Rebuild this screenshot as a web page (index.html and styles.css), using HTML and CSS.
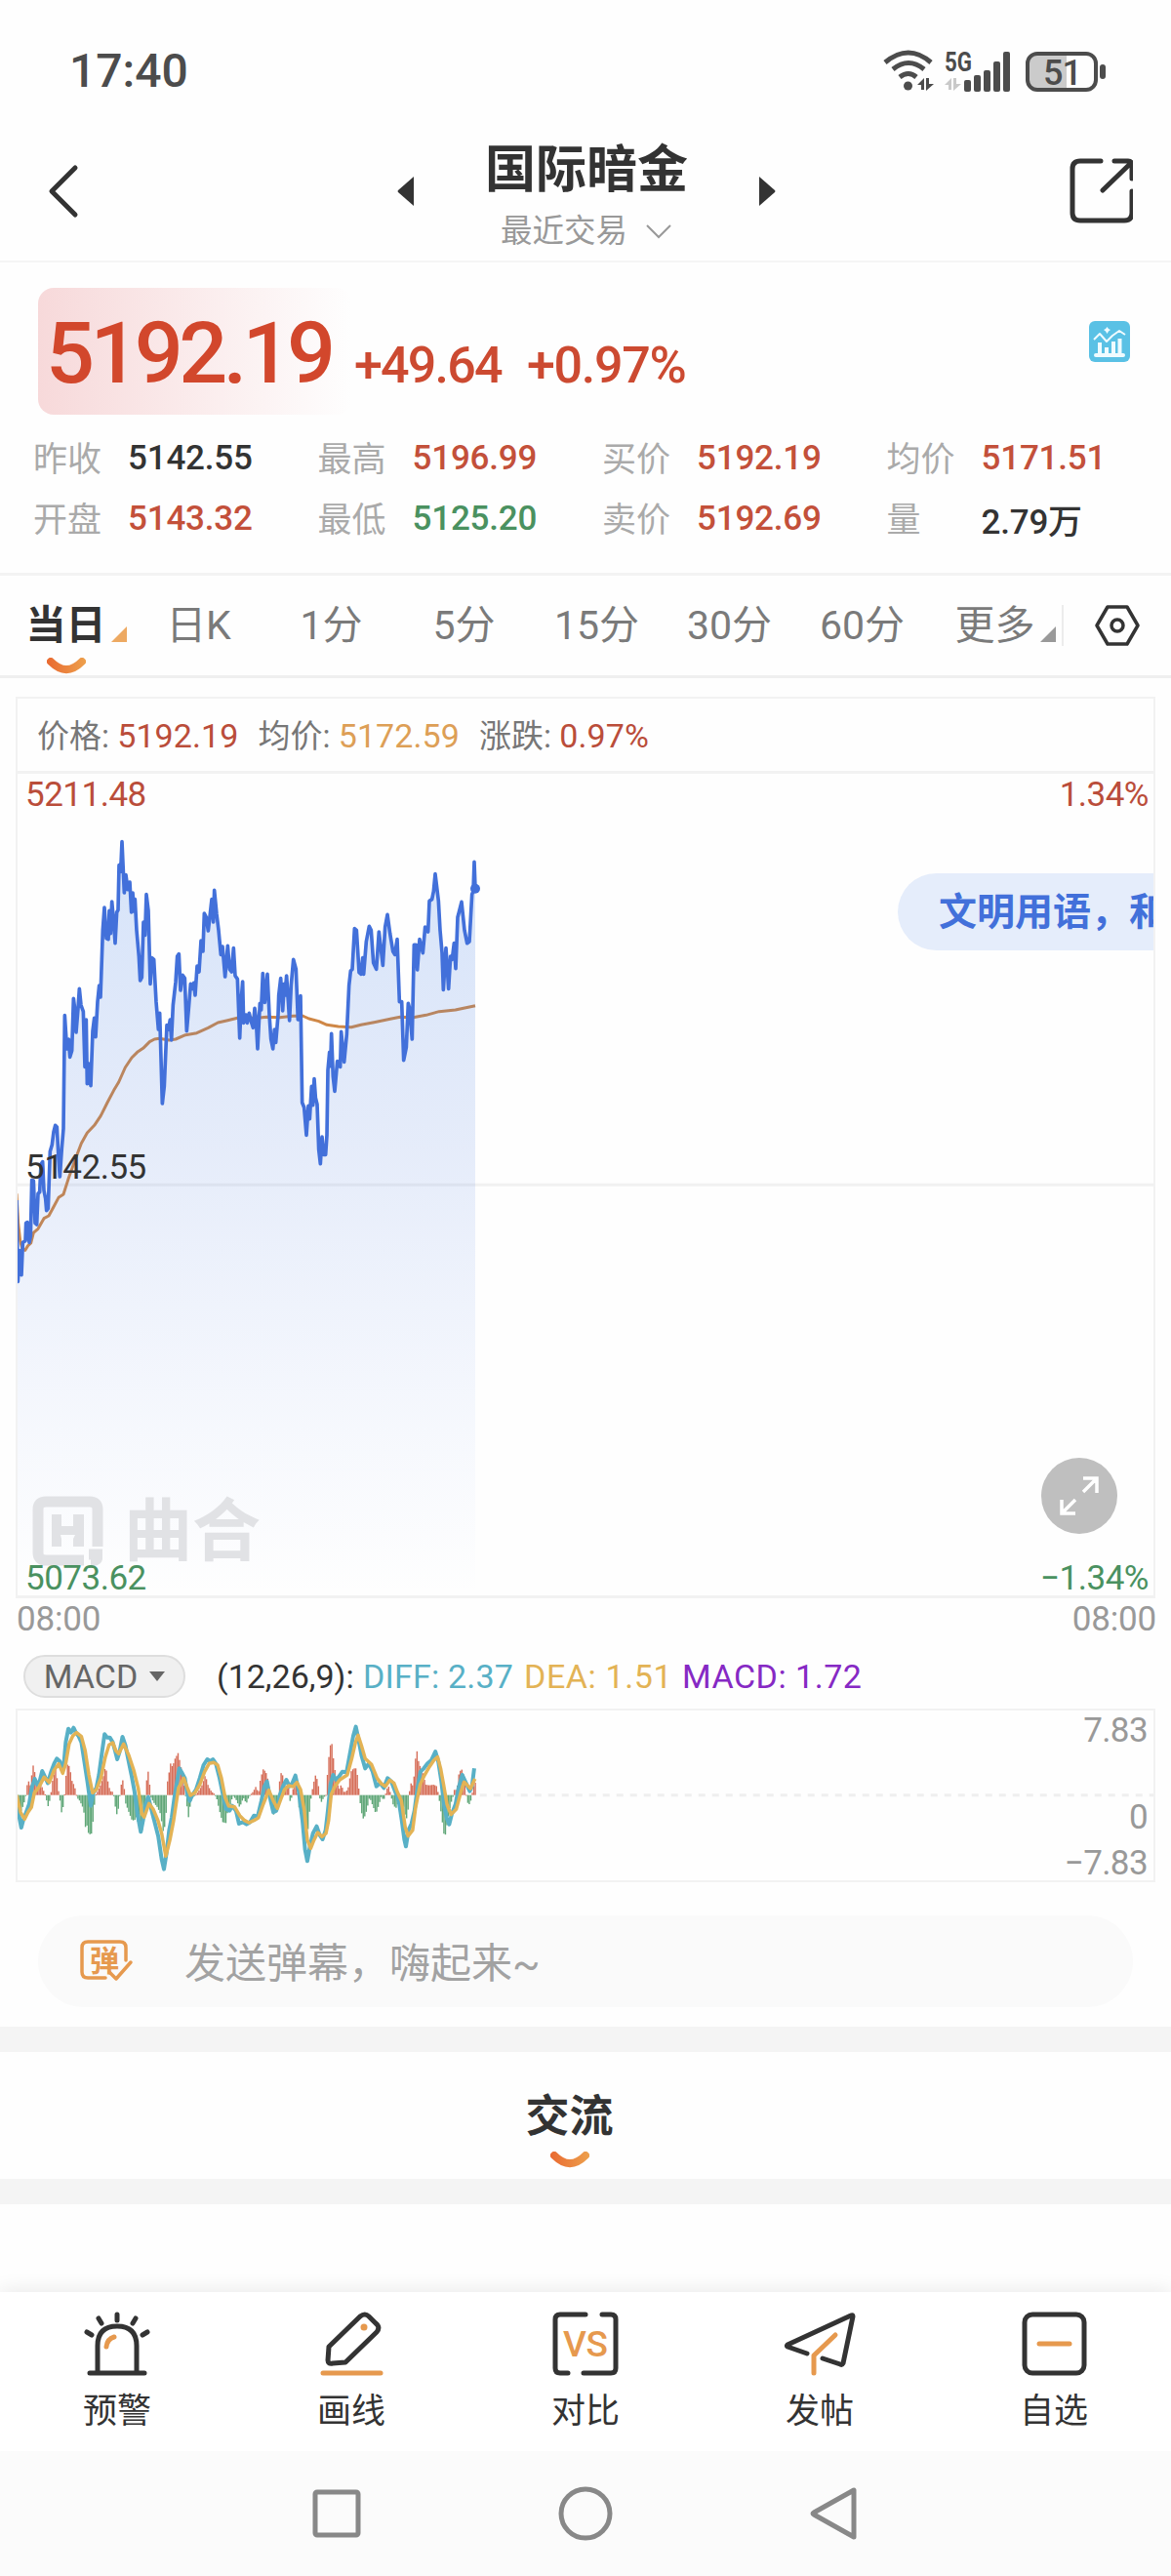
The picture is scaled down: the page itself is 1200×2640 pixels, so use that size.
FILE: index.html
```html
<!DOCTYPE html>
<html lang="zh-CN">
<head>
    <meta charset="UTF-8">
    <meta name="viewport" content="width=device-width, initial-scale=1.0">
    <title>国际暗金</title>
    <link rel="stylesheet" href="styles.css">
</head>
<body>
    <div class="status-bar">
        <span class="clock">17:40</span>
        <svg class="status-icons" width="230" height="44" viewBox="0 0 230 44">
            <g fill="none" stroke="#4c4c4c" stroke-width="5">
                <path d="M2 13Q26 -7 49 13"/>
                <path d="M10 20Q26 7 42 20"/>
                <path d="M17 28Q26 21 34 28"/>
            </g>
            <circle cx="25.500" cy="37" r="4.500" fill="#4c4c4c"/>
            <path d="M35 36L42 29V41H39V36ZM44 29H47V35H52L44 42Z" fill="#4c4c4c"/>
            <path d="M63 36L70 29V41H67V36ZM72 29H75V35H80L72 42Z" fill="#c9c9c9"/>
            <text class="net" x="63" y="22" textLength="28" lengthAdjust="spacingAndGlyphs">5G</text>
            <g fill="#4c4c4c">
                <rect x="83" y="31" width="7" height="12" rx="2"/>
                <rect x="93" y="26" width="7" height="17" rx="2"/>
                <rect x="103" y="21" width="7" height="22" rx="2"/>
                <rect x="113" y="12" width="7" height="31" rx="2"/>
                <rect x="123" y="2" width="7" height="41" rx="2"/>
            </g>
            <path d="M157 4H188V41H157Q148 41 148 32V13Q148 4 157 4Z" fill="#cbcbcb"/>
            <rect x="148" y="4" width="70" height="37" rx="10" fill="none" stroke="#4c4c4c" stroke-width="4"/>
            <rect x="222" y="15" width="6" height="15" rx="3" fill="#4c4c4c"/>
            <text class="battery" x="164" y="35.500">51</text>
        </svg>
    </div>

    <header class="header">
        <svg class="back" width="32" height="56" viewBox="0 0 32 56"><path d="M28 4L4 28L28 52" fill="none" stroke="#333" stroke-width="5" stroke-linecap="round" stroke-linejoin="round"/></svg>
        <div class="switcher">
            <svg width="17" height="30" viewBox="0 0 17 30"><path d="M17 0V30L1 16Q0 15 1 14Z" fill="#333"/></svg>
            <div class="title">
                <h1>国际暗金</h1>
                <p>最近交易<svg width="28" height="16" viewBox="0 0 28 16"><path d="M2 2L14 14L26 2" fill="none" stroke="#999" stroke-width="2"/></svg></p>
            </div>
            <svg width="17" height="30" viewBox="0 0 17 30"><path d="M0 0V30L16 16Q17 15 16 14Z" fill="#333"/></svg>
        </div>
        <svg class="share" width="65" height="67" viewBox="0 0 65 67" fill="none" stroke="#333" stroke-width="5" stroke-linecap="round" stroke-linejoin="round"><path d="M32 3H11Q3 3 3 11V56Q3 64 11 64H56Q64 64 64 56V34M46 3H60Q64 3 64 8V21M34 33L62 6"/></svg>
    </header>

    <section class="quote">
        <div class="price-line">
            <span class="price">5192.19</span>
            <span class="change">+49.64</span>
            <span class="percent">+0.97%</span>
            <svg class="chart-badge" width="42" height="42" viewBox="0 0 42 42">
                <rect width="42" height="42" rx="6" fill="#5ac1e5"/>
                <g fill="none" stroke="#effbff" stroke-linejoin="round">
                    <path d="M5 19L11 13L18 21L24 15L31 10L37 14" stroke-width="2"/>
                    <path d="M11 34V22M18 34V27M25 34V21M31.500 34V18" stroke-width="4"/>
                    <path d="M7 35H35" stroke-width="4" stroke-linecap="round"/>
                </g>
                <path d="M18.500 6L20 8L22 9L20 10.500L18.500 13L17 10.500L15 9L17 8Z" fill="#effbff"/>
            </svg>
        </div>
        <dl class="stats">
            <div><dt>昨收</dt><dd>5142.55</dd></div>
            <div><dt>最高</dt><dd class="up">5196.99</dd></div>
            <div><dt>买价</dt><dd class="up">5192.19</dd></div>
            <div><dt>均价</dt><dd class="up">5171.51</dd></div>
            <div><dt>开盘</dt><dd class="up">5143.32</dd></div>
            <div><dt>最低</dt><dd class="down">5125.20</dd></div>
            <div><dt>卖价</dt><dd class="up">5192.69</dd></div>
            <div><dt>量</dt><dd>2.79万</dd></div>
        </dl>
    </section>

    <nav class="tabs">
        <a class="tab active">当日<i class="corner"></i>
            <svg class="smile" width="40" height="18" viewBox="0 0 40 18"><path d="M4 4Q20 20 36 4" fill="none" stroke="url(#smileFill)" stroke-width="8" stroke-linecap="round"/></svg>
        </a>
        <a class="tab">日K</a>
        <a class="tab">1分</a>
        <a class="tab">5分</a>
        <a class="tab">15分</a>
        <a class="tab">30分</a>
        <a class="tab">60分</a>
        <a class="tab more">更多<i class="corner"></i></a>
        <a class="settings">
            <svg width="46" height="42" viewBox="0 0 46 42" fill="none" stroke="#333"><path d="M13 2H33L44 21L33 40H13L2 21Z" stroke-width="3.500" stroke-linejoin="round"/><circle cx="23" cy="21" r="6" stroke-width="3.500"/></svg>
        </a>
    </nav>

    <section class="chart-card">
        <div class="legend">
            <span>价格: <b class="up">5192.19</b></span>
            <span>均价: <b class="avg">5172.59</b></span>
            <span>涨跌: <b class="up">0.97%</b></span>
        </div>
        <div class="price-chart">
            <svg id="priceChart" width="1164" height="842" viewBox="54 -81 3492 2526" fill="none">
                <defs>
                    <linearGradient id="areaFill" x1="0" y1="0" x2="0" y2="1">
                        <stop offset="0" stop-color="#3f80e8" stop-opacity="0.21"/>
                        <stop offset="0.4" stop-color="#4b7be0" stop-opacity="0.14"/>
                        <stop offset="1" stop-color="#6a95f4" stop-opacity="0"/>
                    </linearGradient>
                    <linearGradient id="smileFill" x1="0" y1="0" x2="40" y2="0" gradientUnits="userSpaceOnUse">
                        <stop offset="0" stop-color="#e96a31"/>
                        <stop offset="1" stop-color="#eda04c"/>
                    </linearGradient>
                </defs>
                <path d="M54 1183H3546" stroke="#f1f1f1" stroke-width="9"/>
                <polyline id="avgLine" stroke="#cf8746" stroke-width="9" stroke-linejoin="round"/>
                <polygon id="priceArea" fill="url(#areaFill)"/>
                <polyline id="priceLine" stroke="#4270da" stroke-width="11" stroke-linejoin="round"/>
                <circle cx="1461" cy="272" r="15" fill="#4270da"/>
            </svg>
            <div class="watermark">
                <svg width="73" height="72" viewBox="0 0 73 72"><path d="M53 66H14Q6 66 6 58V14Q6 6 14 6H59Q67 6 67 14V52M58 60H72" fill="none" stroke="#e1e2e5" stroke-width="11"/><path d="M60 60H72V63Q72 71 63 72H60ZM20 19H30V31H42V19H53V52H42V44L44 40H29L30 44V52H20Z" fill="#e1e2e5"/></svg>
                <span>曲合</span>
            </div>
            <div class="danmaku"><span>文明用语，和谐交流</span></div>
            <span class="axis top-left up">5211.48</span>
            <span class="axis top-right up">1.34%</span>
            <span class="axis mid-left">5142.55</span>
            <span class="axis bottom-left down">5073.62</span>
            <span class="axis bottom-right down">−1.34%</span>
            <svg class="expand" width="78" height="78" viewBox="0 0 78 78"><circle cx="39" cy="39" r="39" fill="#bfbfbf"/><path d="M43 35L57 21M43 21H57V36M35 43L21 57M21 43V57H35" fill="none" stroke="#fff" stroke-width="3.500"/></svg>
        </div>
    </section>
    <div class="time-axis"><span>08:00</span><span>08:00</span></div>

    <section class="macd">
        <div class="macd-head">
            <button class="pill">MACD<i></i></button>
            <span class="params">(12,26,9):</span>
            <span class="diff">DIFF: 2.37</span>
            <span class="dea">DEA: 1.51</span>
            <span class="bar">MACD: 1.72</span>
        </div>
        <div class="macd-chart">
            <svg width="1164" height="174" viewBox="47 222 3042 522" preserveAspectRatio="none" fill="none">
                <path class="line zero" d="M1285 482H3089"/>
                <g id="bars"></g>
                <polyline class="line diff-line" id="diffLine"/>
                <polyline class="line dea-line" id="deaLine"/>
            </svg>
            <span class="scale high">7.83</span>
            <span class="scale middle">0</span>
            <span class="scale low">−7.83</span>
        </div>
    </section>

    <div class="comment-input">
        <svg width="56" height="46" viewBox="0 0 56 46"><path d="M27 40H9Q3 40 3 34V9Q3 3 9 3H42Q48 3 48 9V22M53 24L38 41L31 34" fill="none" stroke="#e6994e" stroke-width="3.500" stroke-linecap="round" stroke-linejoin="round"/><text x="11" y="33">弹</text></svg>
        <span>发送弹幕，嗨起来~</span>
    </div>

    <section class="community">
        <h2>交流</h2>
        <svg width="40" height="18" viewBox="0 0 40 18"><path d="M4 4Q20 20 36 4" fill="none" stroke="url(#smileFill)" stroke-width="8" stroke-linecap="round"/></svg>
    </section>
    <div class="feed"></div>

    <footer class="toolbar">
        <a>
            <svg width="68" height="66" viewBox="0 0 68 66" fill="none" stroke="#333" stroke-width="5" stroke-linecap="round"><path d="M14 62V35Q14 15 34 15T54 35V62M6 63H62M34 3V9M15 7L18 12M53 7L50 12M3 21L8 24M65 21L60 24"/><path d="M23 36Q24 28 31 26" stroke="#e6994e"/></svg>
            预警
        </a>
        <a>
            <svg width="68" height="66" viewBox="0 0 68 66" fill="none" stroke="#333" stroke-width="5" stroke-linecap="round" stroke-linejoin="round"><path d="M11 36L43 5Q48 1 52 5L59 12Q64 16 60 21L28 52L15 53Q10 54 10 50Z"/><circle cx="47" cy="16" r="3.500" fill="#e6994e" stroke="none"/><path d="M5 63H64" stroke="#e6994e"/></svg>
            画线
        </a>
        <a>
            <svg width="68" height="66" viewBox="0 0 68 66" fill="none" stroke="#333" stroke-width="5" stroke-linecap="round"><path d="M34 3H8Q3 3 3 8V58Q3 63 8 63H16M32 63H60Q65 63 65 58V8Q65 3 60 3H51"/><text x="11" y="46" textLength="46">VS</text></svg>
            对比
        </a>
        <a>
            <svg width="74" height="66" viewBox="0 0 74 66" fill="none" stroke="#333" stroke-width="5" stroke-linecap="round" stroke-linejoin="round"><path d="M24 43L4 36Q3 35 4 34L69 4Q71 3 71 5L61 53Q60 55 58 54L40 48"/><path d="M53 24L31 45V63" stroke="#e6994e"/></svg>
            发帖
        </a>
        <a>
            <svg width="68" height="66" viewBox="0 0 68 66" fill="none" stroke-width="5" stroke-linecap="round"><rect x="4" y="3" width="61" height="60" rx="8" stroke="#333"/><path d="M19 33H50" stroke="#e6994e"/></svg>
            自选
        </a>
    </footer>

    <div class="system-nav">
        <svg width="56" height="56" viewBox="0 0 56 56"><rect x="6" y="6" width="44" height="44" rx="2" fill="none" stroke="#888" stroke-width="5"/></svg>
        <svg width="56" height="56" viewBox="0 0 56 56"><circle cx="28" cy="28" r="25" fill="none" stroke="#888" stroke-width="5"/></svg>
        <svg width="56" height="56" viewBox="0 0 56 56"><path d="M48 4V52L7 29Q5 28 7 27Z" fill="none" stroke="#888" stroke-width="5" stroke-linejoin="round"/></svg>
    </div>
    <script src="chart.js"></script>
</body>
</html>
```
FILE: styles.css
```css
* {
    box-sizing: border-box;
}
body {
    margin: 0;
    width: 1200px;
    height: 2640px;
    display: flex;
    flex-direction: column;
    background-color: #fefefe;
    color: #333;
    font-family: Roboto, "Noto Sans CJK SC", sans-serif;
    overflow: hidden;
}
svg {
    display: block;
    flex: none;
}
h1, h2, p, dl, dt, dd {
    margin: 0;
}
.up {
    color: #c3503a;
}
.down {
    color: #4a9160;
}

/* phone status bar */
.status-bar {
    height: 145px;
    padding: 0 65px 0 71px;
    display: flex;
    align-items: center;
    justify-content: space-between;
}
.clock {
    font-size: 48px;
    font-weight: 500;
    color: #4c4c4c;
}
.status-icons {
    overflow: visible;
}
.status-icons text {
    font-weight: 600;
    fill: #4c4c4c;
}
.status-icons .net {
    font-size: 28px;
    font-weight: 700;
}
.status-icons .battery {
    font-size: 36px;
    font-weight: 500;
    letter-spacing: -1px;
}

/* title */
.header {
    height: 124px;
    padding: 0 39px 21px 49px;
    display: flex;
    align-items: center;
    justify-content: space-between;
    border-bottom: 2px solid #f5f5f5;
}
.switcher {
    width: 388px;
    display: flex;
    align-items: center;
    justify-content: space-between;
}
.back {
    margin-right: 25px;
}
.title {
    text-align: center;
}
.title h1 {
    font-size: 52px;
    line-height: 60px;
    margin-top: 14px;
}
.title p {
    display: flex;
    align-items: center;
    justify-content: center;
    gap: 18px;
    font-size: 32.500px;
    line-height: 48px;
    margin-top: 8px;
    color: #999;
}

/* quote */
.quote {
    height: 321px;
    padding: 26px 0 0 39px;
    border-bottom: 3px solid #f3f3f3;
}
.price-line {
    display: flex;
    height: 130px;
    color: #cc4a31;
    font-weight: 500;
    white-space: nowrap;
}
.price {
    width: 322px;
    padding-left: 8px;
    border-radius: 16px;
    background: linear-gradient(90deg, #f7d9da, #fefefe);
    font-size: 88px;
    line-height: 133px;
    letter-spacing: -4.600px;
    color: #d2472c;
}
.change, .percent {
    font-size: 52px;
    line-height: 159px;
    letter-spacing: -1.800px;
}
.change {
    width: 179px;
    padding-left: 2px;
}
.percent {
    letter-spacing: -1.300px;
}
.chart-badge {
    margin: 34px 42px 0 auto;
}
.stats {
    display: grid;
    grid-template-columns: repeat(4, 291.500px);
    grid-template-rows: 62px 62px;
    margin: 13px 0 0 -5px;
    font-size: 35px;
}
.stats div {
    display: flex;
    align-items: center;
    white-space: nowrap;
}
.stats dt {
    width: 97px;
    padding-bottom: 4px;
    color: #aaa;
}
.stats dd {
    font-weight: 500;
    letter-spacing: -0.200px;
}

/* period tabs */
.tabs {
    height: 105px;
    display: flex;
    border-bottom: 3px solid #efefef;
    font-size: 41px;
    line-height: 103px;
    color: #7a7a7a;
}
.tab {
    position: relative;
    width: 136px;
    padding-right: 1px;
    text-align: center;
}
.tab.active {
    color: #333;
    font-weight: 700;
}
.corner {
    position: absolute;
    right: 6px;
    bottom: 34px;
    border-left: 16px solid transparent;
    border-bottom: 16px solid #eda962;
}
.more .corner {
    border-bottom-color: #999;
}
.smile {
    position: absolute;
    left: 48px;
    bottom: 0;
}
.settings {
    flex: 1;
    display: flex;
    align-items: center;
    justify-content: center;
    margin: 30px 0;
    border-left: 2px solid #ececec;
}

/* intraday chart */
.chart-card {
    margin: 19px 15px 0 16px;
    width: 1168px;
    border: 2px solid #f2f2f2;
    border-bottom-width: 3px;
}
.legend {
    height: 77px;
    padding-left: 20px;
    display: flex;
    gap: 20px;
    border-bottom: 3px solid #f2f2f2;
    font-size: 33px;
    line-height: 76px;
    color: #777;
}
.legend b {
    font-size: 34px;
    font-weight: 400;
    letter-spacing: 0.100px;
}
.legend .avg {
    color: #dd9f56;
}
.legend b.up, .axis.up {
    color: #ba4d3a;
}
.price-chart {
    position: relative;
    height: 842px;
    overflow: hidden;
}
.axis {
    position: absolute;
    font-size: 35px;
    line-height: 40px;
    letter-spacing: -0.500px;
}
.top-left, .mid-left, .bottom-left {
    left: 8px;
}
.top-right, .bottom-right {
    right: 5px;
}
.top-left, .top-right {
    top: 2px;
}
.mid-left {
    top: 384px;
}
.bottom-left, .bottom-right {
    bottom: 0;
    line-height: 34px;
}
.watermark {
    position: absolute;
    left: 15px;
    top: 740px;
    display: flex;
    gap: 21px;
    font-size: 70px;
    font-weight: 700;
    line-height: 74px;
    color: #e1e2e5;
}
.danmaku {
    position: absolute;
    left: 902px;
    top: 102px;
    height: 79px;
    padding: 0 42px;
    border-radius: 40px;
    background-color: #e5edfb;
    color: #4270da;
    font-size: 39px;
    font-weight: 700;
    line-height: 81px;
    white-space: nowrap;
}
.expand {
    position: absolute;
    right: 37px;
    top: 701px;
}
.time-axis {
    height: 46px;
    margin: 0 15px 0 17px;
    display: flex;
    justify-content: space-between;
    font-size: 35px;
    line-height: 44px;
    letter-spacing: -0.200px;
    color: #999;
}

/* macd */
.macd {
    padding: 12px 16px 0;
}
.macd-head {
    height: 44px;
    padding-left: 8px;
    display: flex;
    align-items: center;
    font-size: 34px;
    white-space: nowrap;
}
.pill {
    width: 166px;
    height: 44px;
    margin-right: 32px;
    display: flex;
    align-items: center;
    justify-content: center;
    gap: 12px;
    padding: 0;
    border: 2px solid #dedede;
    border-radius: 22px;
    background-color: #f0f0f0;
    color: #666;
    font: inherit;
}
.pill i {
    border: 8px solid transparent;
    border-top: 10px solid #666;
    border-bottom: 0;
}
.params {
    width: 150px;
}
.diff {
    width: 165px;
    color: #58b0c6;
    letter-spacing: 0.200px;
}
.dea {
    width: 162px;
    color: #e3b355;
    letter-spacing: 0.600px;
}
.bar {
    color: #8629c4;
    letter-spacing: 0.500px;
}
.macd-chart {
    position: relative;
    height: 178px;
    margin-top: 11px;
    border: 2px solid #f2f2f2;
}
.line {
    vector-effect: non-scaling-stroke;
    stroke-width: 3px;
    stroke-linejoin: round;
}
.zero {
    stroke: #efefef;
    stroke-dasharray: 7 7;
}
.diff-line {
    stroke: #58b0c6;
    stroke-width: 4px;
}
.dea-line {
    stroke: #e3b355;
    stroke-width: 3.500px;
}
.bar-up {
    fill: #d66e59;
}
.bar-down {
    fill: #60a778;
}
.scale {
    position: absolute;
    right: 6px;
    font-size: 35px;
    line-height: 40px;
    letter-spacing: -0.600px;
    color: #999;
}
.high {
    top: 1px;
}
.middle {
    top: 90px;
}
.low {
    bottom: 0;
    line-height: 34px;
}

/* comment box */
.comment-input {
    height: 94px;
    margin: 34px 39px 20px;
    padding-left: 42px;
    display: flex;
    align-items: center;
    gap: 52px;
    border-radius: 47px;
    background-color: #fafafa;
    font-size: 42px;
    color: #a2a2a2;
}
.comment-input span {
    padding-bottom: 4px;
}
.comment-input text {
    font-size: 30px;
    font-weight: 700;
    fill: #e6994e;
}
.community {
    height: 182px;
    padding: 32px 33px 0 0;
    display: flex;
    flex-direction: column;
    align-items: center;
    border: solid #f4f4f4;
    border-width: 26px 0;
}
.community h2 {
    font-size: 45px;
    line-height: 70px;
}
.feed {
    flex: 1;
}

/* bottom bars */
.toolbar {
    height: 163px;
    padding-top: 20px;
    display: grid;
    grid-template-columns: repeat(5, 1fr);
    background-color: #fff;
    box-shadow: 0 0 20px rgba(0, 0, 0, 0.1);
}
.toolbar a {
    display: flex;
    flex-direction: column;
    align-items: center;
    font-size: 35px;
    line-height: 74px;
}
.toolbar text {
    font-size: 37px;
    font-weight: 500;
    fill: #e6994e;
    stroke: none;
}
.system-nav {
    position: relative;
    height: 128px;
    display: grid;
    grid-template-columns: repeat(3, 255px);
    place-content: center;
    justify-items: center;
    background-color: #fbfbfb;
}
```
FILE: chart.js
```js
const price = "51,1230 55,1480 60,1385 66,1460 70,1360 78,1355 80,1300 84,1298 90,1360 94,1340 98,1168 103,1170 108,1300 113,1305 117,1210 122,1205 126,1120 131,1112 135,1200 140,1225 143,1262 148,1255 154,1080 160,1060 165,1020 170,1000 175,1005 180,1100 184,1158 190,1070 195,1010 199,662 204,740 207,765 211,735 215,790 221,770 226,610 231,650 234,714 240,640 244,580 249,630 256,650 261,820 265,675 268,872 273,810 279,878 285,710 290,670 294,728 300,620 305,570 309,606 316,400 321,330 327,425 333,428 336,340 340,410 344,312 350,380 354,440 359,345 363,338 366,200 371,220 375,128 382,285 387,230 393,275 399,252 404,345 408,285 412,342 415,305 420,400 427,480 431,555 436,545 441,375 446,415 450,290 456,340 462,565 467,485 473,490 480,620 487,705 491,655 499,933 505,880 513,692 518,705 523,675 527,738 532,630 540,560 545,480 550,473 555,585 561,538 568,548 574,710 580,640 586,565 592,580 596,562 600,600 606,510 612,528 618,432 624,465 628,348 634,360 640,402 646,350 651,305 656,375 659,277 666,350 672,400 679,475 684,450 692,543 700,448 706,520 712,528 718,455 723,540 730,550 737,732 742,610 746,558 749,685 756,660 760,685 766,655 772,680 778,700 783,640 787,670 792,765 799,625 803,645 808,533 814,622 822,535 828,660 833,735 839,765 844,705 848,745 855,660 857,600 863,548 869,648 874,565 876,600 881,540 890,678 895,570 902,490 910,520 916,675 924,602 929,930 935,945 942,1030 948,940 952,980 958,880 962,938 966,857 970,915 975,935 980,1075 985,1118 990,1035 995,1090 1001,1090 1005,1030 1008,830 1013,775 1016,818 1019,718 1024,850 1029,895 1037,803 1046,820 1049,712 1058,805 1066,720 1073,570 1078,525 1083,520 1090,395 1096,400 1104,530 1110,535 1115,485 1118,535 1126,435 1135,388 1141,400 1148,500 1157,520 1165,405 1177,508 1184,390 1191,352 1199,410 1208,465 1214,475 1221,428 1228,620 1235,620 1241,800 1249,760 1255,625 1259,640 1267,735 1273,445 1279,445 1283,522 1290,428 1300,470 1307,390 1316,405 1320,310 1328,305 1333,280 1338,227 1348,310 1353,400 1359,470 1363,583 1371,455 1379,580 1385,480 1390,490 1396,440 1401,518 1407,360 1411,345 1419,313 1428,400 1436,440 1443,435 1451,290 1455,280 1458,190 1461,272";

const average = "51,1210 56,1300 62,1355 68,1378 77,1384 86,1370 95,1362 103,1330 117,1318 135,1286 150,1278 165,1250 180,1222 195,1212 210,1165 235,1095 250,1055 268,1023 290,1000 310,970 330,930 350,892 365,867 385,822 405,792 422,775 440,763 460,743 475,735 490,733 520,738 540,735 570,722 605,716 640,700 670,684 700,677 730,670 790,670 820,667 860,668 900,664 930,663 950,672 980,680 1005,691 1040,696 1080,698 1110,691 1150,683 1200,673 1230,667 1270,668 1310,661 1350,650 1400,645 1461,632";

const diff = "45,483 50,540 57,582 62,560 70,535 78,510 85,460 93,432 100,450 106,440 113,408 120,425 128,445 137,410 145,385 152,370 160,378 165,395 170,400 176,320 183,278 190,290 197,275 203,290 210,300 218,320 226,380 234,440 243,515 250,475 258,460 265,420 272,360 280,295 287,305 294,305 302,320 308,345 314,372 320,350 328,303 336,330 343,370 352,420 360,470 368,540 377,595 383,560 390,510 397,488 404,520 413,560 424,610 433,680 439,710 446,660 453,590 460,550 467,490 480,400 488,415 495,430 502,480 508,500 515,482 525,465 535,430 545,390 555,372 563,378 570,372 578,385 588,430 597,480 605,525 615,530 622,515 632,530 640,570 650,565 660,572 670,565 680,545 690,548 700,500 708,455 715,440 723,490 732,535 740,530 750,480 758,455 767,435 775,455 783,445 791,422 800,470 810,560 817,650 823,685 830,640 838,600 848,578 856,605 864,618 872,590 878,530 885,450 892,420 900,435 908,425 917,410 928,412 938,350 946,300 953,272 960,310 968,360 978,400 988,385 998,410 1008,455 1018,445 1028,460 1038,430 1048,440 1058,470 1068,500 1076,560 1083,620 1087,640 1094,590 1102,570 1110,530 1118,460 1126,410 1135,400 1145,385 1155,375 1166,348 1174,380 1182,440 1190,520 1197,555 1203,572 1210,540 1220,510 1228,460 1238,420 1248,445 1258,470 1264,455 1270,400";

const dea = "45,483 55,535 66,556 75,535 84,520 92,475 103,460 118,427 132,443 145,405 157,386 168,415 176,385 185,325 195,300 205,290 218,302 228,345 238,420 248,475 258,465 270,430 282,365 292,328 302,321 310,345 318,355 331,325 345,360 358,405 370,460 380,540 386,550 399,508 410,525 423,560 433,600 444,670 455,620 465,560 478,460 492,430 500,455 510,483 522,475 535,450 548,410 560,385 573,382 583,390 593,430 603,490 612,515 628,518 642,545 655,560 667,567 680,560 692,552 705,510 720,467 732,500 743,523 752,495 762,465 773,453 785,456 795,443 805,465 815,530 823,620 832,646 841,620 851,597 862,610 873,600 880,560 887,480 897,455 910,435 930,420 942,370 952,320 959,298 968,330 978,370 995,388 1010,430 1022,448 1032,455 1044,436 1055,445 1065,475 1075,500 1085,580 1093,608 1105,590 1113,520 1125,450 1135,425 1150,395 1162,375 1172,365 1180,400 1188,450 1197,510 1208,542 1222,525 1235,470 1243,442 1260,462 1272,432";

const histogram = "45,482 50,520 55,530 62,510 67,482 68,460 75,440 80,455 84,410 88,385 92,420 98,455 103,445 110,455 119,480 121,484 126,520 131,500 134,484 136,462 140,430 148,400 152,440 156,480 158,490 163,535 168,515 171,480 173,440 180,380 186,405 192,445 197,450 202,478 206,492 212,500 222,525 227,580 230,570 236,604 244,600 249,540 253,484 260,470 268,450 276,420 281,390 287,440 293,470 300,472 304,490 310,545 316,520 319,484 320,470 326,430 332,470 334,505 345,540 352,560 358,560 364,548 372,590 378,600 384,540 388,490 389,450 395,410 400,460 403,490 410,505 420,520 428,540 436,600 442,560 445,490 447,440 455,385 460,395 467,370 475,353 482,390 488,430 494,475 497,500 503,550 508,510 514,488 522,482 530,470 540,450 548,420 556,455 565,472 572,478 578,490 586,530 594,565 603,568 608,530 615,510 622,484 630,495 640,520 650,490 658,508 666,484 676,472 684,455 690,478 696,430 703,403 710,410 717,440 722,484 730,545 738,520 745,484 747,440 752,408 757,430 762,455 770,450 776,510 780,484 785,450 792,440 797,500 800,530 806,490 812,540 822,600 828,520 832,484 837,450 843,422 850,440 853,484 858,505 865,490 872,480 876,400 882,330 887,325 892,380 898,430 906,465 912,450 920,475 930,465 938,410 945,400 953,400 957,440 961,484 965,530 972,558 980,530 988,488 995,510 1005,540 1012,515 1020,484 1025,500 1030,484 1033,465 1040,455 1045,484 1052,515 1060,522 1068,490 1076,500 1086,560 1092,520 1095,470 1100,440 1105,460 1109,390 1114,340 1120,385 1130,410 1138,450 1148,452 1160,450 1168,455 1173,484 1180,540 1189,618 1197,560 1205,510 1212,484 1216,460 1221,470 1228,410 1237,402 1243,450 1250,505 1257,512 1262,480 1268,450 1273,440";

function setPoints(id, points) {
    document.getElementById(id).setAttribute('points', points);
}

setPoints('priceLine', price);
setPoints('priceArea', '51,2445 ' + price + ' 1461,2445');
setPoints('avgLine', average);
setPoints('diffLine', diff);
setPoints('deaLine', dea);

// one thin bar per sample, drawn from the zero line
const ZERO = 482;
const STEP = 4;
const knots = histogram.split(' ').map(p => p.split(',').map(Number));
const bars = document.getElementById('bars');
let k = 0;

for (let x = 47; x < 1273; x += STEP) {
    while (knots[k + 1][0] < x) k++;
    const [x1, y1] = knots[k];
    const [x2, y2] = knots[k + 1];
    const y = y1 + (y2 - y1) * (x - x1) / (x2 - x1);
    const rect = document.createElementNS('http://www.w3.org/2000/svg', 'rect');
    rect.setAttribute('x', x);
    rect.setAttribute('y', Math.min(y, ZERO));
    rect.setAttribute('width', STEP - 0.3);
    rect.setAttribute('height', Math.max(Math.abs(y - ZERO), 3));
    rect.setAttribute('class', y < ZERO ? 'bar-up' : 'bar-down');
    bars.appendChild(rect);
}
```
